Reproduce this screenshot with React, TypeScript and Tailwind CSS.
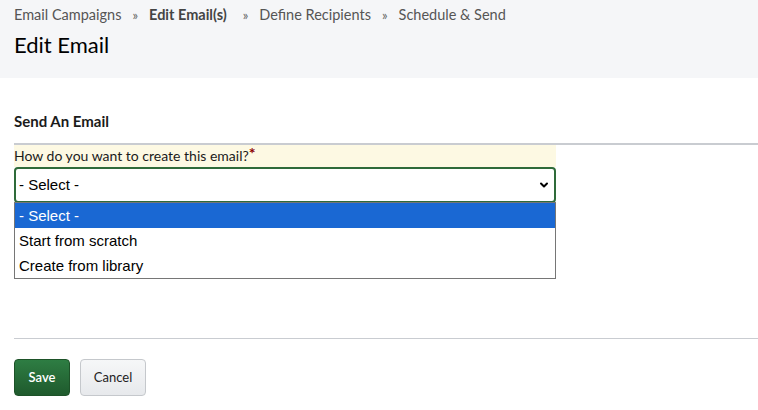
import { ChevronDown } from "lucide-react";

const CRUMBS = [
  { label: "Email Campaigns", active: false },
  { label: "Edit Email(s)", active: true },
  { label: "Define Recipients", active: false },
  { label: "Schedule & Send", active: false },
];

const OPTIONS = ["- Select -", "Start from scratch", "Create from library"];

export default function App() {
  return (
    <div className="w-[758px] h-[410px] bg-white font-['Lato','Open_Sans',sans-serif] text-[#1b1b1b]">
      {/* Page header */}
      <div className="h-[78px] bg-[#f5f6f8] px-[14px] pt-[5px]">
        <div className="flex items-center text-[14.5px] text-[#555] leading-[20px]">
          {CRUMBS.map((c, i) => (
            <div key={c.label} className="flex items-center">
              {i > 0 && <span className={`text-[13px] text-[#666] mr-[11px] ${i === 2 ? "ml-[16px]" : "ml-[11px]"}`}>»</span>}
              <span className={c.active ? "font-bold text-[#444]" : ""}>{c.label}</span>
            </div>
          ))}
        </div>
        <h1 className="mt-[7px] text-[22px] leading-[26px] text-black">Edit Email</h1>
      </div>

      {/* Form */}
      <div className="pl-[14px] pt-[33px]">
        <h2 className="text-[15px] font-bold leading-[20px] text-[#1b1b1b]">Send An Email</h2>
        <div className="mt-[12px] h-[2px] bg-[#c9ccd1]" />
        <div className="relative w-[542px]">
          <div className="h-[22px] bg-[#fdf9e3] text-[14px] leading-[22px] text-[#1b1b1b]">
            How do you want to create this email?<span className="text-[#8b0000] font-bold text-[16px] align-top leading-[16px]">*</span>
          </div>
          <div className="h-[36px] flex items-center justify-between border-2 border-[#2f6b3a] rounded-[4px] pl-[3px] pr-[4px] font-['Liberation_Sans',Arial,sans-serif] text-[15px] text-black">
            <span>- Select -</span>
            <ChevronDown size={12} strokeWidth={4} className="text-black" />
          </div>
          {/* open native list */}
          <div className="absolute left-0 top-[57px] w-[542px] border border-[#767676] bg-white font-['Liberation_Sans',Arial,sans-serif] text-[15px] z-10">
            {OPTIONS.map((o, i) => (
              <div
                key={o}
                className={`h-[25px] leading-[25px] px-[4px] ${i === 0 ? "bg-[#1a68d3] text-white" : "text-black"}`}
              >
                {o}
              </div>
            ))}
          </div>
        </div>

        <div className="mt-[135px] h-px bg-[#c9ccd1]" />

        <div className="mt-[20px] flex gap-[10px]">
          <button className="h-[37px] w-[56px] rounded-[4px] border border-[#1d5228] bg-gradient-to-b from-[#2e7d43] to-[#1f5a2d] text-white text-[13px] font-semibold">
            Save
          </button>
          <button className="h-[37px] w-[66px] rounded-[4px] border border-[#c5c8cc] bg-gradient-to-b from-[#f6f7f8] to-[#e7e9ec] text-[#222] text-[13px]">
            Cancel
          </button>
        </div>
      </div>
    </div>
  );
}
